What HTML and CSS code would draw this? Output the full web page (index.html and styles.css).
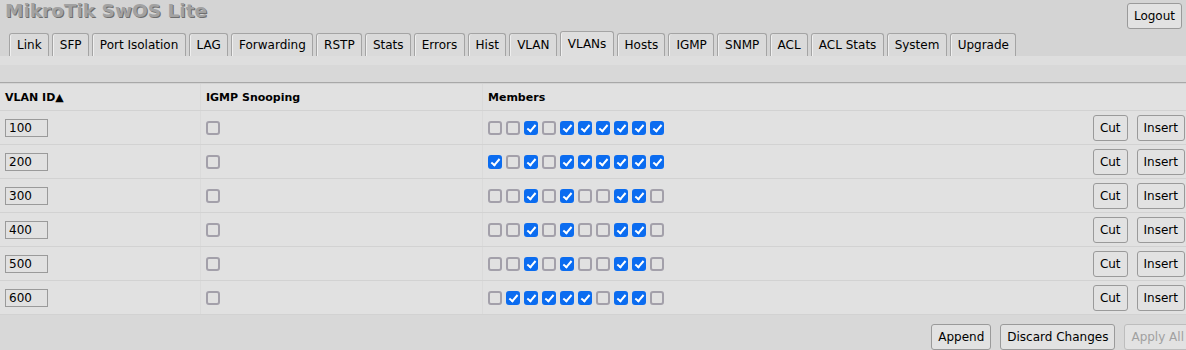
FILE: index.html
```html
<!doctype html>
<html>
  <head>
    <meta name="viewport" content="width=device-width, initial-scale=1">
    <link rel="stylesheet" href="styles.css">
    <title>MikroTik SwOS Lite</title>
  </head>
  <body>
    <div class="top">
      <h1 class="title">MikroTik SwOS Lite</h1>
      <button class="btn logout">Logout</button>
    </div>

    <ul class="tabs">
      <li>Link</li>
      <li>SFP</li>
      <li>Port Isolation</li>
      <li>LAG</li>
      <li>Forwarding</li>
      <li>RSTP</li>
      <li>Stats</li>
      <li>Errors</li>
      <li>Hist</li>
      <li>VLAN</li>
      <li class="active">VLANs</li>
      <li>Hosts</li>
      <li>IGMP</li>
      <li>SNMP</li>
      <li>ACL</li>
      <li>ACL Stats</li>
      <li>System</li>
      <li>Upgrade</li>
    </ul>
    <div class="band"></div>

    <table class="grid">
      <thead>
        <tr>
          <th class="c-id">VLAN ID&#9650;</th>
          <th class="c-igmp">IGMP Snooping</th>
          <th class="c-members">Members</th>
          <th class="c-ops"></th>
        </tr>
      </thead>
      <tbody id="rows"></tbody>
    </table>

    <div class="actions">
      <button class="btn">Append</button>
      <button class="btn">Discard Changes</button>
      <button class="btn apply" disabled>Apply All</button>
    </div>

    <script>
    'use strict'
    var vlans = [
      { id: "100", members: "0010111111" },
      { id: "200", members: "1010111111" },
      { id: "300", members: "0010100110" },
      { id: "400", members: "0010100110" },
      { id: "500", members: "0010100110" },
      { id: "600", members: "0111110110" }
    ];

    var tbody = document.getElementById("rows");

    vlans.forEach(function (v) {
      var boxes = "";
      for (var i = 0; i < v.members.length; i++) {
        boxes += '<input type="checkbox" class="cb"' + (v.members[i] == "1" ? " checked" : "") + '>';
      }
      var tr = document.createElement("tr");
      tr.innerHTML =
        '<td class="c-id"><input type="text" class="field" value="' + v.id + '"></td>' +
        '<td class="c-igmp"><input type="checkbox" class="cb"></td>' +
        '<td class="c-members"><div class="ports">' + boxes + '</div></td>' +
        '<td class="c-ops"><button class="btn">Cut</button><button class="btn">Insert</button></td>';
      tbody.appendChild(tr);
    });
    </script>
  </body>
</html>
```

FILE: styles.css
```css
body {
  margin: 0;
  background: #d4d4d4;
  font-family: "DejaVu Sans", Verdana, sans-serif;
  font-size: 12px;
  color: #000;
  overflow: hidden;
}

.top {
  display: flex;
  justify-content: space-between;
  align-items: flex-start;
  height: 31px;
  padding: 0 4px 0 5px;
}

.title {
  margin: 0;
  font-size: 18.5px;
  font-weight: bold;
  color: #a2a2a2;
  text-shadow: 1px 1px 0 #6e6e6e;
}

.btn {
  font-family: "DejaVu Sans", Verdana, sans-serif;
  font-size: 12px;
  color: #000;
  background: #e2e2e2;
  border: 1px solid #9a9a9a;
  border-radius: 3px;
  height: 26px;
  padding: 0 6px;
  margin: 0;
}

.btn:disabled {
  color: #a0a0a0;
  border-color: #bdbdbd;
}

.logout {
  margin-top: 3px;
}

.tabs {
  list-style: none;
  margin: 0;
  padding: 0 0 0 9px;
  display: flex;
  align-items: flex-end;
  gap: 3px;
  height: 25px;
}

.tabs li {
  height: 22px;
  line-height: 22px;
  padding: 0 6.25px 0 7px;
  background: #dadada;
  border: 1px solid #a4a4a4;
  border-bottom: none;
  border-radius: 3px 3px 0 0;
  box-shadow: inset 1px 0 0 #efefef;
}

.tabs li.active {
  height: 24px;
  line-height: 24px;
  background: #dedede;
}

.band {
  height: 9px;
  background: #dedede;
  border-bottom: 17px solid #d8d8d8;
  box-shadow: 0 1px 0 #a8a8a8;
  margin-bottom: 2px;
}

.grid {
  width: 100%;
  border-collapse: collapse;
  background: #e1e1e1;
}

.grid th {
  height: 26px;
  text-align: left;
  font-size: 11px;
  font-weight: bold;
  padding: 0 5px;
  border-bottom: 1px solid #d2d2d2;
}

.grid td {
  height: 33px;
  padding: 0 5px;
  border-bottom: 1px solid #d2d2d2;
  vertical-align: middle;
}

.grid .c-id { width: 190px; }
.grid .c-igmp { width: 271px; border-left: 1px solid #dadada; }
.grid .c-members { border-left: 1px solid #dadada; padding-left: 5px; }
.grid td.c-ops {
  text-align: right;
  padding: 0 1px 0 0;
  white-space: nowrap;
}

.c-ops .btn + .btn {
  margin-left: 9px;
}

.field {
  width: 43px;
  height: 18px;
  box-sizing: border-box;
  border: 1px solid #9a9a9a;
  background: #e1e1e1;
  font-family: "DejaVu Sans", Verdana, sans-serif;
  font-size: 12px;
  padding: 0 3px;
  margin: 0;
  display: block;
}

.ports {
  display: flex;
  gap: 4px;
}

.cb {
  appearance: none;
  -webkit-appearance: none;
  width: 14px;
  height: 14px;
  margin: 0;
  box-sizing: border-box;
  border: 2px solid #a3a0aa;
  border-radius: 3px;
  background: #e1e1e1;
  position: relative;
  display: block;
}

.cb:checked {
  background: #0b6cf0;
  border-color: #0b6cf0;
}

.cb:checked::after {
  content: "";
  position: absolute;
  left: 3px;
  top: 0px;
  width: 3px;
  height: 7px;
  border: solid #fff;
  border-width: 0 2px 2px 0;
  transform: rotate(40deg);
}

.actions {
  display: flex;
  justify-content: flex-end;
  gap: 9px;
  padding-top: 9px;
  background: #d8d8d8;
  height: 40px;
}

.actions .apply {
  flex-shrink: 0;
  margin-right: -5px;
}
```
